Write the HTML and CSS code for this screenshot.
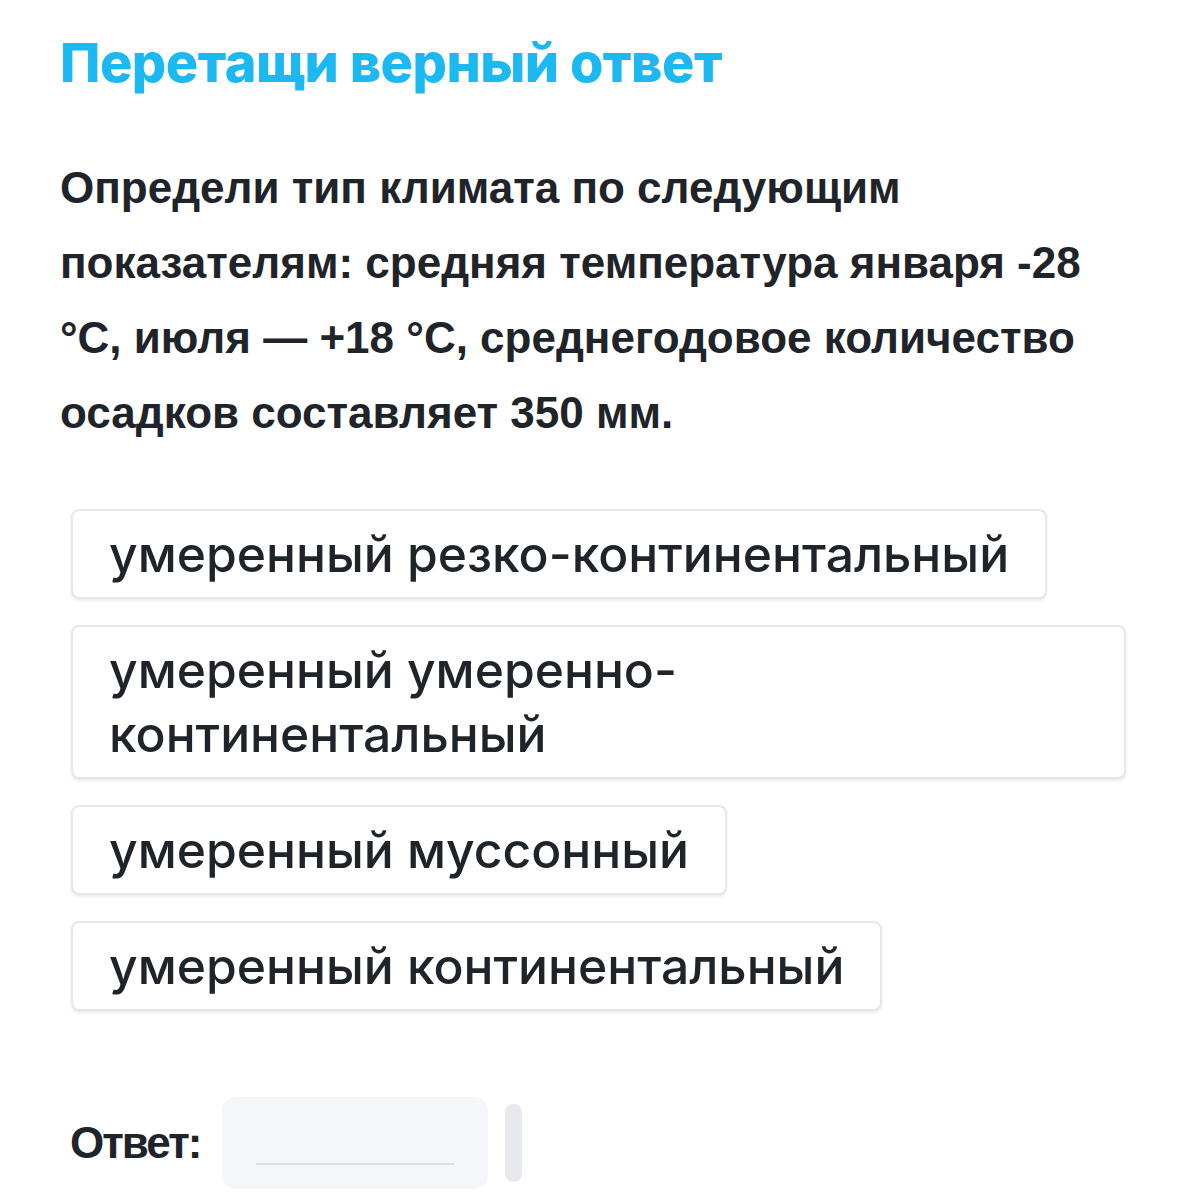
FILE: index.html
```html
<!DOCTYPE html>
<html lang="ru">
<head>
    <meta charset="UTF-8">
    <meta name="viewport" content="width=device-width, initial-scale=1.0">
    <title>Перетащи верный ответ</title>
    <link rel="stylesheet" href="styles.css">
</head>
<body>

    <div class="task">
        <!-- Task Header -->
        <h1 class="task-title">Перетащи верный ответ</h1>

        <p class="question">Определи тип климата по следующим показателям: средняя температура января -28 °С, июля — +18 °С, среднегодовое количество осадков составляет 350 мм.</p>

        <!-- Draggable Options -->
        <div class="options">
            <div class="option">умеренный резко-континентальный</div>
            <div class="option">умеренный умеренно-континентальный</div>
            <div class="option">умеренный муссонный</div>
            <div class="option">умеренный континентальный</div>
        </div>

        <!-- Answer Drop Zone -->
        <div class="answer">
            <span class="answer-label">Ответ:</span>
            <div class="drop-zone">
                <div class="drop-line"></div>
            </div>
            <div class="drop-handle"></div>
        </div>
    </div>

</body>
</html>
```

FILE: styles.css
```css
body {
    margin: 0;
    padding: 0;
    background-color: #ffffff;
    color: #1f242b;
    font-family: "Inter", "Liberation Sans", sans-serif;
}

.task {
    padding: 28px 0 0 60px;
    width: 1066px;
}

/* Title */
.task-title {
    margin: 0;
    font-family: "Inter", sans-serif;
    font-size: 54px;
    font-weight: 800;
    letter-spacing: -0.5px;
    line-height: 70px;
    color: #1cb8f2;
}

/* Question */
.question {
    margin: 52px 0 0 0;
    font-family: "Liberation Sans", sans-serif;
    font-size: 44px;
    font-weight: bold;
    line-height: 75px;
    color: #1f242b;
}

/* Options */
.options {
    display: flex;
    flex-direction: column;
    align-items: flex-start;
    gap: 26px;
    margin: 59px 0 0 11px;
}

.option {
    padding: 11px 36px 11px 36px;
    border: 2px solid #e6e7e9;
    border-radius: 8px;
    box-shadow: 0 2px 3px rgba(0, 0, 0, 0.08);
    font-size: 49.8px;
    font-weight: 500;
    line-height: 64px;
    color: #1f242b;
    background: #fff;
}

/* Answer */
.answer {
    display: flex;
    align-items: center;
    margin: 86px 0 0 10px;
}

.answer-label {
    font-family: "Liberation Sans", sans-serif;
    font-size: 44px;
    font-weight: bold;
    letter-spacing: -2px;
    color: #1f242b;
    margin-right: 22px;
}

.drop-zone {
    width: 266px;
    height: 92px;
    background: #f5f6f9;
    border-radius: 14px;
    display: flex;
    align-items: flex-end;
    justify-content: center;
}

.drop-line {
    width: 198px;
    height: 2px;
    background: #dcdfe4;
    margin-bottom: 24px;
}

.drop-handle {
    width: 17px;
    height: 78px;
    margin-left: 17px;
    background: #e7e9ec;
    border-radius: 8px;
}
```
